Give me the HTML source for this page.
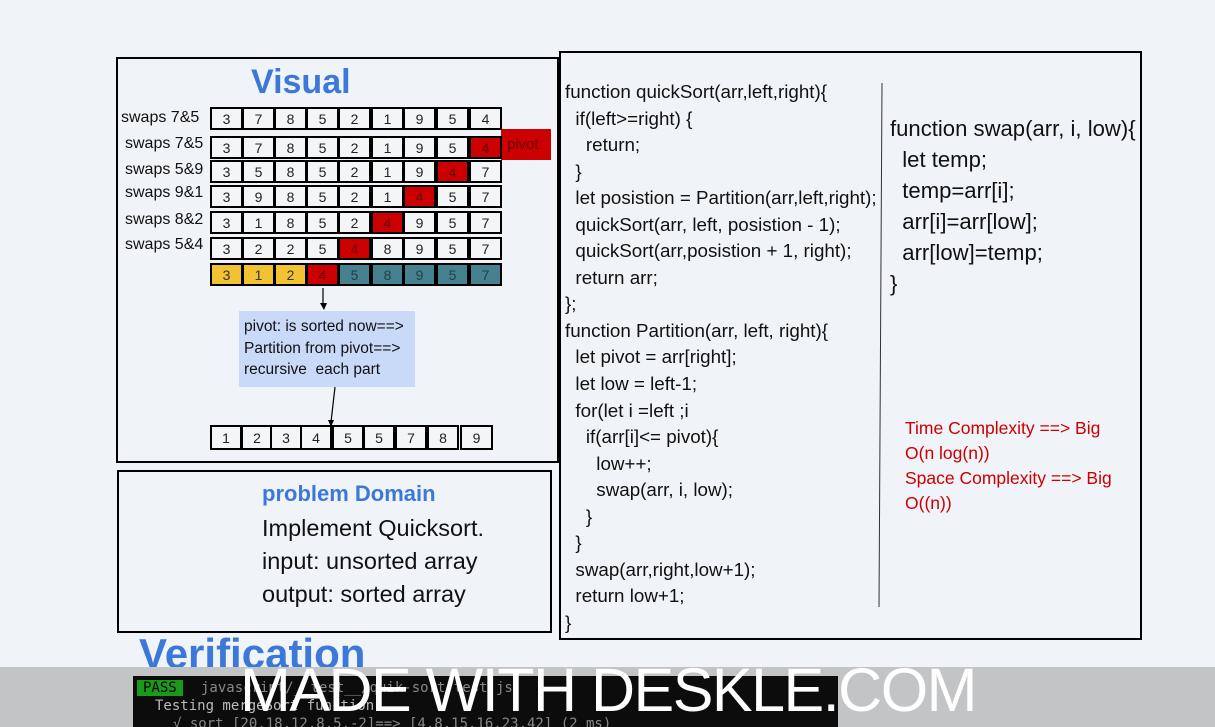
<!DOCTYPE html><html><head><style>
html,body{margin:0;width:1215px;height:727px;overflow:hidden}
body{background:#f0f3f7;font-family:"Liberation Sans",sans-serif;position:relative}
.a{position:absolute}
.box{position:absolute;border:2px solid #000;box-sizing:border-box}
.c{position:absolute;height:23px;width:30px;border:2px solid #000;box-sizing:border-box;background:#f4f5f7;font-size:14px;text-align:center;line-height:20px;color:#222}
.r{background:#cc0000;color:#600}.y{background:#f1c232;color:#333}.t{background:#45818e;color:#1f3f45}
.lbl{position:absolute;font-size:16px;color:#111}
.code{position:absolute;left:565px;top:79px;font-size:18.8px;line-height:26.55px;color:#111;white-space:pre}
.sw{position:absolute;left:890px;top:113px;font-size:22.1px;line-height:31px;color:#111;white-space:pre}
</style></head><body>
<div class="box" style="left:116px;top:57px;width:443px;height:406px"></div>
<div class="box" style="left:117px;top:470px;width:435px;height:163px"></div>
<div class="box" style="left:559px;top:51px;width:583px;height:589px"></div>
<div class="a" style="left:251px;top:63px;font-size:34px;font-weight:bold;color:#3c78d8">Visual</div>
<div class="lbl" style="left:121px;top:109px">swaps 7&amp;5</div>
<div class="lbl" style="left:125px;top:135px">swaps 7&amp;5</div>
<div class="lbl" style="left:125px;top:161px">swaps 5&amp;9</div>
<div class="lbl" style="left:125px;top:184px">swaps 9&amp;1</div>
<div class="lbl" style="left:125px;top:211px">swaps 8&amp;2</div>
<div class="lbl" style="left:125px;top:236px">swaps 5&amp;4</div>
<div class="a" style="left:501px;top:129px;width:50px;height:31px;background:#cc0000;color:#600;font-size:15px;line-height:31px;padding-left:6px;box-sizing:border-box">pivot</div>
<div id="g"></div>
<div class="a" style="left:239px;top:311px;width:176px;height:76px;background:#c9daf8;font-size:15.5px;line-height:21.5px;padding:5px 0 0 5px;box-sizing:border-box;color:#111">pivot: is sorted now==&gt;<br>Partition from pivot==&gt;<br>recursive&nbsp; each part</div>
<svg class="a" style="left:0;top:0" width="600" height="460"><path d="M323 288V305M335 387L331 422" stroke="#000" stroke-width="1.2"/><path d="M320 303L324 310L327 303ZM328 420L331 427L334 420Z"/></svg>
<div class="a" style="left:262px;top:481px;font-size:22px;font-weight:bold;color:#3c78d8">problem Domain</div>
<div class="a" style="left:262px;top:512px;font-size:23.5px;line-height:33px;color:#111">Implement Quicksort.<br>input: unsorted array<br>output: sorted array</div>
<div class="code">function quickSort(arr,left,right){
  if(left&gt;=right) {
    return;
  }
  let posistion = Partition(arr,left,right);
  quickSort(arr, left, posistion - 1);
  quickSort(arr,posistion + 1, right);
  return arr;
};
function Partition(arr, left, right){
  let pivot = arr[right];
  let low = left-1;
  for(let i =left ;i
    if(arr[i]&lt;= pivot){
      low++;
      swap(arr, i, low);
    }
  }
  swap(arr,right,low+1);
  return low+1;
}</div>
<svg class="a" style="left:870px;top:80px" width="20" height="530"><path d="M12 3L9 527" stroke="#333" stroke-width="1"/></svg>
<div class="sw">function swap(arr, i, low){
  let temp;
  temp=arr[i];
  arr[i]=arr[low];
  arr[low]=temp;
}</div>
<div class="a" style="left:905px;top:416px;font-size:17.5px;line-height:25px;color:#cc0000;width:215px">Time Complexity ==&gt; Big O(n log(n))<br>Space Complexity ==&gt; Big O((n))</div>
<div class="a" style="left:139px;top:630px;font-size:42px;font-weight:bold;color:#3c78d8">Verification</div>
<div class="a" style="left:0;top:667px;width:1215px;height:60px;background:#c2c4c6"></div>
<div class="a" style="left:133px;top:676px;width:705px;height:51px;background:#0c0c0c;font-family:'DejaVu Sans Mono',monospace;font-size:14px;color:#888;white-space:pre;overflow:hidden"><span style="position:absolute;left:4px;top:4px;background:#1a9a1a;color:#000;padding:0 6px">PASS</span><span style="position:absolute;left:68px;top:4px">javascript/__test__/quik-sort.test.js</span><span style="position:absolute;left:22px;top:22px;color:#bbb">Testing mergeSort function</span><span style="position:absolute;left:40px;top:40px">√ sort [20,18,12,8,5,-2]==&gt; [4,8,15,16,23,42] (2 ms)</span></div>
<div class="a" style="left:240px;top:655px;font-size:61px;color:#fff;letter-spacing:-1.5px;white-space:nowrap">MADE WITH DESKLE.COM</div>
<script>
var g=document.getElementById('g'),h='';
var xs=[210,242,274,306,338,371,403,436,469];
var rows=[[107,'378521954',''],[136,'378521954','........r'],[160,'358521947','.......r.'],[185,'398521457','......r..'],[211,'318524957','.....r...'],[237,'322548957','....r....'],[263,'312458957','yyyrttttt']];
rows.forEach(function(r){for(var i=0;i<9;i++){var cl=r[2][i];var k=cl=='r'?'r':cl=='y'?'y':cl=='t'?'t':'';h+='<div class="c '+k+'" style="left:'+xs[i]+'px;top:'+r[0]+'px;width:33px">'+r[1][i]+'</div>';}});
var bx=[210,241,270,300,332,363,395,427,460],bv='123455789';
for(var i=0;i<9;i++)h+='<div class="c" style="left:'+bx[i]+'px;top:425px;width:'+(i==8?33:32)+'px;height:25px;line-height:22px">'+bv[i]+'</div>';
g.innerHTML=h;
</script>
</body></html>
